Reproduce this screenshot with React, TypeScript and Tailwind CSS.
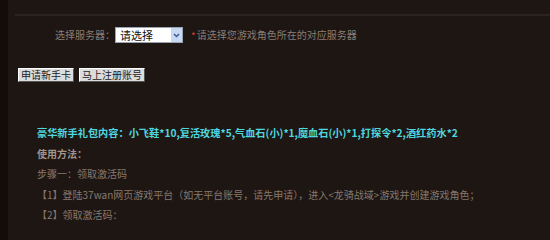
import React from "react";

const cjk = { fontFamily: '"Noto Sans CJK SC", "Noto Sans", sans-serif' };

export default function App() {
  return (
    <div className="w-[550px] h-[240px] bg-[#1e1613] flex overflow-hidden" style={cjk}>
      <div className="w-[8px] shrink-0 bg-[#120c0a]" />
      <div className="flex-1 flex flex-col">
        <div className="mt-[14px] ml-[7px] h-[2px] bg-[#2c2320]" />
        <div className="mt-[11px] flex items-center h-[16px] pl-[47px]">
          <span className="text-[10px] leading-[16px] text-[#8a7d74]">选择服务器：</span>
          <div className="ml-[0px] w-[68px] h-[16px] bg-white border border-[#9aa3b1] flex items-center">
            <span className="flex-1 pl-[4px] text-[11px] leading-[14px] text-[#111]">请选择</span>
            <div className="w-[11px] h-[14px] bg-[#c8d8f2] flex items-center justify-center">
              <svg width="7" height="5" viewBox="0 0 7 5">
                <path d="M1 1 L3.5 3.5 L6 1" stroke="#3a5a9a" strokeWidth="1.5" fill="none" />
              </svg>
            </div>
          </div>
          <span className="ml-[8px] text-[10px] text-[#d0402a]">*</span>
          <span className="ml-[1px] text-[10px] leading-[16px] text-[#8a7d74]">请选择您游戏角色所在的对应服务器</span>
        </div>
        <div className="mt-[25px] flex gap-[5px] pl-[10px]">
          <button className="h-[14px] px-[2px] bg-[#dcdcdc] border border-t-white border-l-white border-r-[#555] border-b-[#555] text-[10px] leading-[12px] text-[#222] flex items-center">
            申请新手卡
          </button>
          <button className="h-[14px] px-[2px] bg-[#dcdcdc] border border-t-white border-l-white border-r-[#555] border-b-[#555] text-[10px] leading-[12px] text-[#222] flex items-center">
            马上注册账号
          </button>
        </div>
        <div className="mt-[41px] pl-[29px] flex flex-col">
          <div className="h-[20px] leading-[20px] text-[10.2px] font-bold text-[#4fd6df] whitespace-nowrap">
            豪华新手礼包内容：小飞鞋*10,复活玫瑰*5,气血石(小)*1,魔血石(小)*1,打探令*2,酒红药水*2
          </div>
          <div className="h-[21px] leading-[21px] text-[10px] font-bold text-[#a0948b]">使用方法：</div>
          <div className="h-[20px] leading-[20px] text-[10px] text-[#86796f]">步骤一：领取激活码</div>
          <div className="h-[21px] leading-[21px] text-[10px] text-[#86796f] whitespace-nowrap">
            【1】登陆37wan网页游戏平台（如无平台账号，请先申请），进入&lt;龙骑战域&gt;游戏并创建游戏角色；
          </div>
          <div className="h-[19px] leading-[19px] text-[10px] text-[#86796f]">【2】领取激活码：</div>
        </div>
      </div>
    </div>
  );
}
